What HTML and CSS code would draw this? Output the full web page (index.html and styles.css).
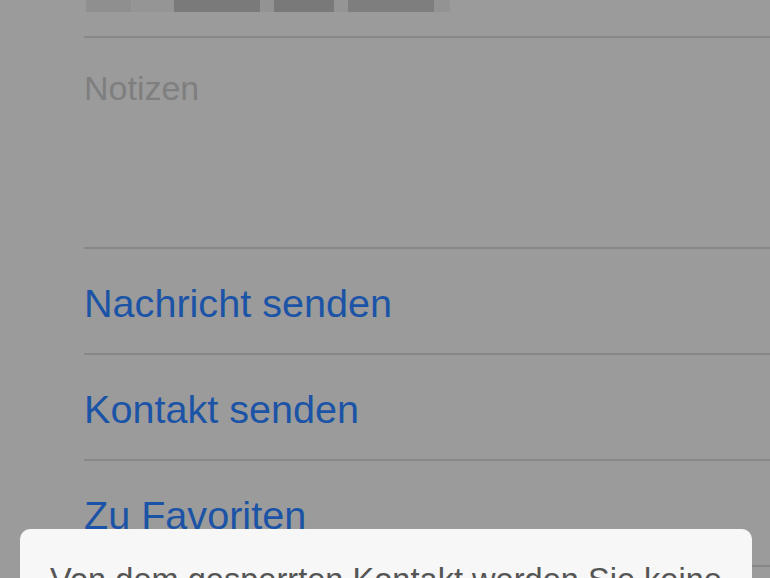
FILE: index.html
```html
<!DOCTYPE html>
<html lang="de">
<head>
    <meta charset="UTF-8">
    <meta name="viewport" content="width=device-width, initial-scale=1.0">
    <title>Kontakt</title>
    <link rel="stylesheet" href="styles.css">
</head>
<body>
    <div class="screen">
        <!-- Contact detail list (dimmed behind the sheet) -->
        <div class="contact-list">
            <div class="row row-name">
                <div class="blurred">
                    <span class="px px-a"></span>
                    <span class="px px-b"></span>
                    <span class="px px-c"></span>
                    <span class="px px-gap"></span>
                    <span class="px px-d"></span>
                    <span class="px px-gap2"></span>
                    <span class="px px-e"></span>
                    <span class="px px-f"></span>
                </div>
            </div>
            <div class="row row-notes">
                <span class="notes-label">Notizen</span>
            </div>
            <div class="row row-action"><span class="action">Nachricht senden</span></div>
            <div class="row row-action"><span class="action">Kontakt senden</span></div>
            <div class="row row-action"><span class="action">Zu Favoriten</span></div>
        </div>

        <!-- Action sheet sliding up from the bottom -->
        <div class="sheet">
            <p class="sheet-text">Von dem gesperrten Kontakt werden Sie keine Anrufe, Nachrichten oder FaceTime-Anrufe empfangen.</p>
        </div>
    </div>
</body>
</html>
```

FILE: styles.css
```css
html, body {
    margin: 0; /* Remove default margin */
    padding: 0;
}

body {
    background: #9b9b9b;
    font-family: 'Liberation Sans', Arial, sans-serif;
}

.screen {
    position: relative;
    width: 770px;
    height: 578px;
    overflow: hidden;
}

.contact-list {
    padding-left: 84px;
}

.row {
    border-bottom: 2px solid #878787;
    box-sizing: border-box;
}

.row-name {
    height: 38px;
}

/* Pixelated name, as in the screenshot */
.blurred {
    display: flex;
    height: 12px;
    padding-left: 2px;
}

.px {
    display: block;
    height: 100%;
}

.px-a { width: 45px; background: #8f8f8f; }
.px-b { width: 43px; background: #959595; }
.px-c { width: 86px; background: #7a7a7a; }
.px-gap { width: 14px; background: #939393; }
.px-d { width: 60px; background: #797979; }
.px-gap2 { width: 14px; background: #959595; }
.px-e { width: 86px; background: #7e7e7e; }
.px-f { width: 16px; background: #939393; }

.row-notes {
    height: 211px;
    padding-top: 30px;
}

.notes-label {
    font-size: 34px;
    line-height: 40px;
    color: #7f7f7f;
}

.row-action {
    height: 106px;
    display: flex;
    align-items: center;
}

.action {
    font-size: 39.6px;
    color: #1b53a6;
    padding-top: 4px;
}

.sheet {
    position: absolute;
    left: 20px;
    top: 529px;
    width: 732px;
    height: 200px;
    background: #f7f7f8;
    border-radius: 10px;
}

.sheet-text {
    margin: 0;
    padding: 30px 26px 0;
    font-size: 32.6px;
    line-height: 42px;
    color: #555555;
    text-align: center;
}
```
